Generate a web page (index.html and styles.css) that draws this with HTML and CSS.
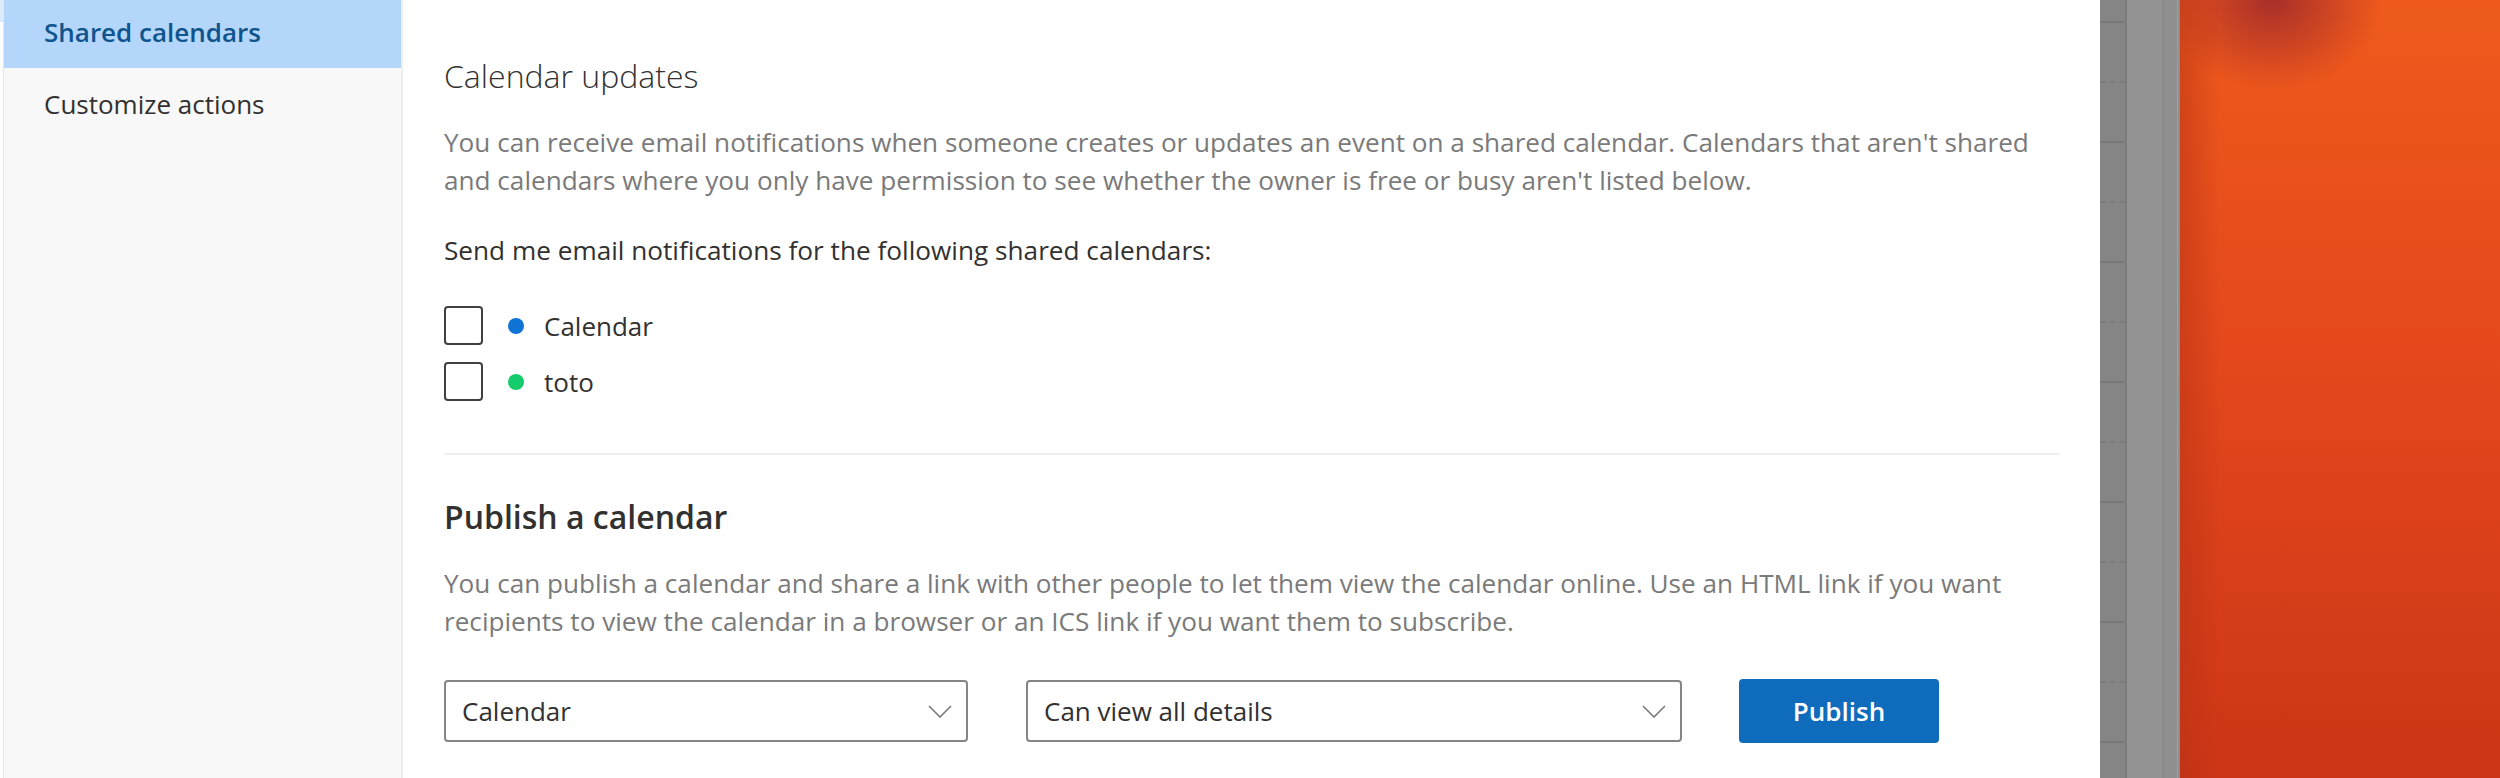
FILE: index.html
```html
<!doctype html>
<html lang="en">
<head>
    <meta charset="utf-8"/>
    <title>Shared calendars</title>
    <link rel="stylesheet" href="styles.css">
</head>

<body>

    <div class="app">
        <!--left edge-->
        <div class="edge"></div>

        <!--settings menu-->
        <div class="side">
            <ul class="menu">
                <li class="current">Shared calendars</li>
                <li>Customize actions</li>
            </ul>
        </div>

        <!--settings page-->
        <div class="main">
            <h2 class="title light">Calendar updates</h2>
            <p class="note">You can receive email notifications when someone creates or updates an event on a shared calendar. Calendars that aren't shared and calendars where you only have permission to see whether the owner is free or busy aren't listed below.</p>
            <p class="label">Send me email notifications for the following shared calendars:</p>

            <ul class="cals">
                <li>
                    <span class="check"></span>
                    <span class="dot blue"></span>
                    <span>Calendar</span>
                </li>
                <li>
                    <span class="check"></span>
                    <span class="dot green"></span>
                    <span>toto</span>
                </li>
            </ul>

            <div class="line"></div>

            <h2 class="title">Publish a calendar</h2>
            <p class="note">You can publish a calendar and share a link with other people to let them view the calendar online. Use an HTML link if you want recipients to view the calendar in a browser or an ICS link if you want them to subscribe.</p>

            <div class="actions">
                <div class="select first">
                    <span>Calendar</span>
                    <svg width="24" height="13" viewBox="0 0 24 13"><path d="M1 1 L12 12 L23 1" fill="none" stroke="#7a7a7a" stroke-width="1.6"/></svg>
                </div>
                <div class="select second">
                    <span>Can view all details</span>
                    <svg width="24" height="13" viewBox="0 0 24 13"><path d="M1 1 L12 12 L23 1" fill="none" stroke="#7a7a7a" stroke-width="1.6"/></svg>
                </div>
                <div class="btn">Publish</div>
            </div>
        </div>

        <!--calendar behind the dialog-->
        <div class="grid">
            <div class="hours">
                <div></div><div class="half"></div><div></div><div class="half"></div>
                <div></div><div class="half"></div><div></div><div class="half"></div>
                <div></div><div class="half"></div><div></div><div class="half"></div>
                <div></div><div class="half"></div>
            </div>
            <div class="col"></div>
            <div class="col2"></div>
        </div>

        <!--desktop-->
        <div class="wall"></div>
    </div>

</body>
</html>
```

FILE: styles.css
```css
* {
    padding: 0;
    margin: 0;
    list-style: none;
    border: 0;
    box-sizing: border-box;
}

body {
    width: 2500px;
    height: 778px;
    overflow: hidden;
    font-family: "Segoe UI", "Open Sans", sans-serif;
    color: #323130;
}

.app {
    display: flex;
    height: 778px;
}

.edge {
    width: 4px;
    background: linear-gradient(to bottom, #dcebfb 0, #dcebfb 22px, #fdfdfd 22px);
    border-right: 1px solid #e6e6e6;
}

.side {
    width: 399px;
    background: #f8f8f8;
    border-right: 2px solid #efefef;
}

.menu {
    margin-top: -4px;
}

.menu li {
    height: 72px;
    line-height: 72px;
    padding-left: 40px;
    font-size: 26px;
    color: #323130;
}

.menu li.current {
    background: #b4d6fa;
    color: #0f548c;
    font-weight: 600;
}

.main {
    width: 1697px;
    background: #fff;
    padding: 54px 40px 0 41px;
}

.title {
    font-size: 32px;
    line-height: 44px;
    font-weight: 600;
    color: #323130;
}

.title.light {
    font-weight: 300;
}

.note {
    margin-top: 25px;
    font-size: 26.15px;
    line-height: 38px;
    color: #7a7a7a;
}

.label {
    margin-top: 32px;
    font-size: 26.2px;
    line-height: 38px;
}

.cals {
    margin-top: 37px;
}

.cals li {
    display: flex;
    align-items: center;
    height: 39px;
    margin-top: 17px;
    font-size: 26px;
}

.cals li:first-child {
    margin-top: 0;
}

.check {
    width: 39px;
    height: 39px;
    border: 2px solid #404040;
    border-radius: 4px;
    margin-right: 25px;
}

.dot {
    width: 16px;
    height: 16px;
    border-radius: 50%;
    margin-right: 20px;
}

.dot.blue {
    background: #0f74d6;
}

.dot.green {
    background: #14cc6c;
}

.line {
    margin-top: 52px;
    height: 2px;
    background: #efefef;
}

.line + .title {
    margin-top: 40px;
}

.actions {
    display: flex;
    align-items: center;
    margin-top: 39px;
}

.select {
    display: flex;
    align-items: center;
    justify-content: space-between;
    height: 62px;
    padding: 0 14px 0 16px;
    border: 2px solid #858585;
    border-radius: 4px;
    font-size: 26px;
}

.select.first {
    width: 524px;
    margin-right: 58px;
}

.select.second {
    width: 656px;
    margin-right: 57px;
}

.btn {
    width: 200px;
    height: 64px;
    line-height: 64px;
    text-align: center;
    background: #0f6cbd;
    border-radius: 4px;
    color: #fff;
    font-size: 26px;
    font-weight: 600;
}

.grid {
    display: flex;
    width: 80px;
    background: #8e8e8e;
}

.hours {
    width: 27px;
    margin-top: -37px;
    background: #858585;
    border-right: 2px solid #7b7b7b;
}

.hours div {
    height: 60px;
    border-bottom: 2px solid #787878;
}

.hours div.half {
    border-bottom: 2px dashed #7b7b7b;
}

.col {
    width: 37px;
    background: #939393;
    border-right: 2px solid #8a8a8a;
}

.col2 {
    width: 14px;
    background: #8f8f8f;
    border-right: 1px solid #a0a0a0;
}

.wall {
    flex: 1;
    background:
        radial-gradient(ellipse 110px 90px at 92px 0, rgba(150, 35, 45, 0.8), rgba(150, 35, 45, 0) 100%),
        linear-gradient(to right, rgba(180, 50, 20, 0.5), rgba(180, 50, 20, 0) 40px),
        linear-gradient(to bottom, #ef5a1c 0, #e4481c 45%, #cd3517 100%);
}
```
